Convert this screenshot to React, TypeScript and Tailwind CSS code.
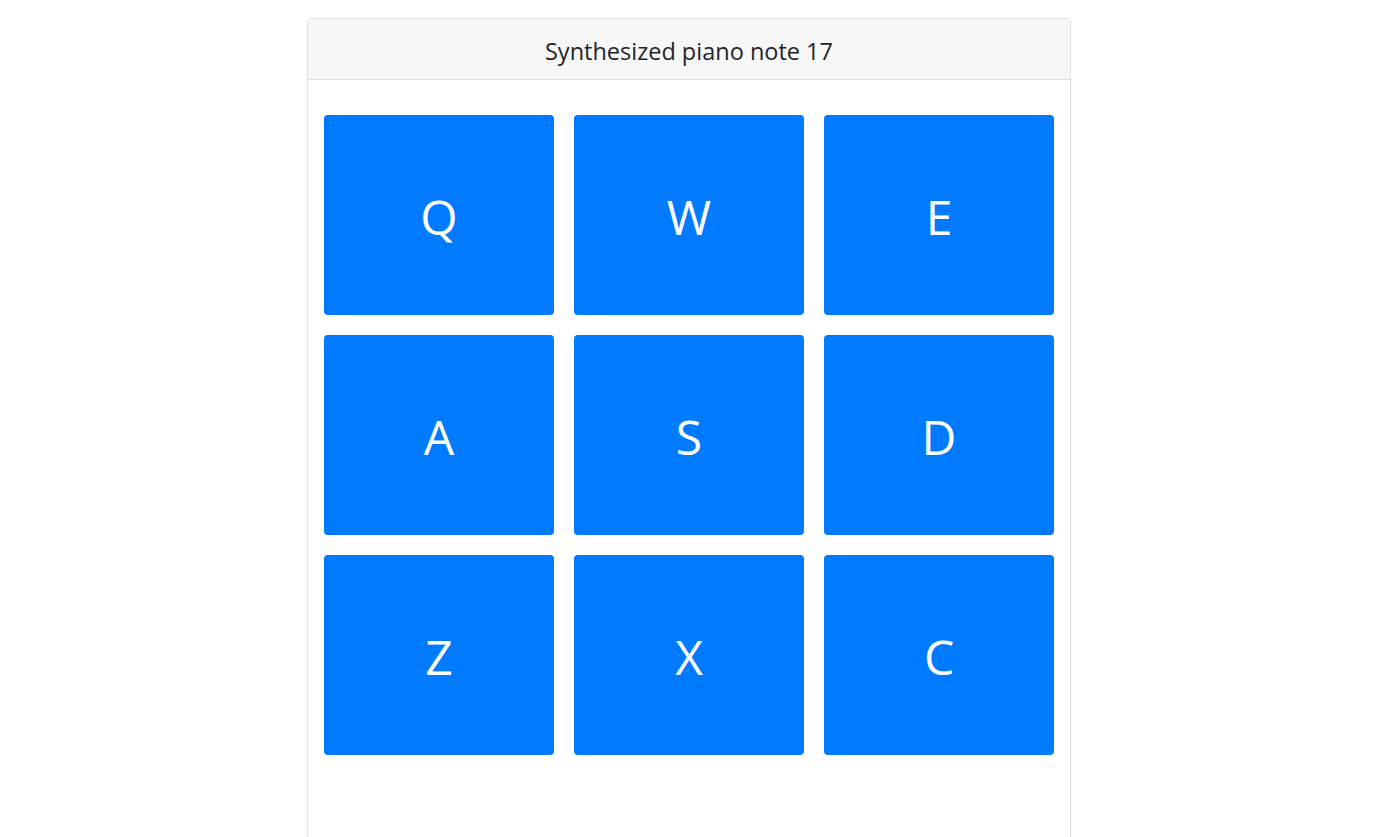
import React from "react";

const keys = ["Q", "W", "E", "A", "S", "D", "Z", "X", "C"];

export default function App() {
  return (
    <div className="h-[837px] overflow-hidden bg-white pt-[18px]" style={{ fontFamily: '"Open Sans", "Noto Sans", sans-serif' }}>
      <div className="ml-[307px] w-[764px] h-[860px] rounded-[4px] border border-[#dfdfdf] bg-white">
        <div className="h-[61px] border-b border-[#dfdfdf] bg-[#f7f7f7] rounded-t-[4px] flex items-center justify-center pt-[5px] text-[23.5px] text-[#212529]">
          Synthesized piano note 17
        </div>
        <div className="px-4 pt-[35px] grid grid-cols-3 gap-5">
          {keys.map((k) => (
            <button
              key={k}
              className="h-[200px] rounded-[4px] bg-[#007bff] text-white text-[48px] flex items-center justify-center pt-[3px]"
            >
              {k}
            </button>
          ))}
        </div>
      </div>
    </div>
  );
}
